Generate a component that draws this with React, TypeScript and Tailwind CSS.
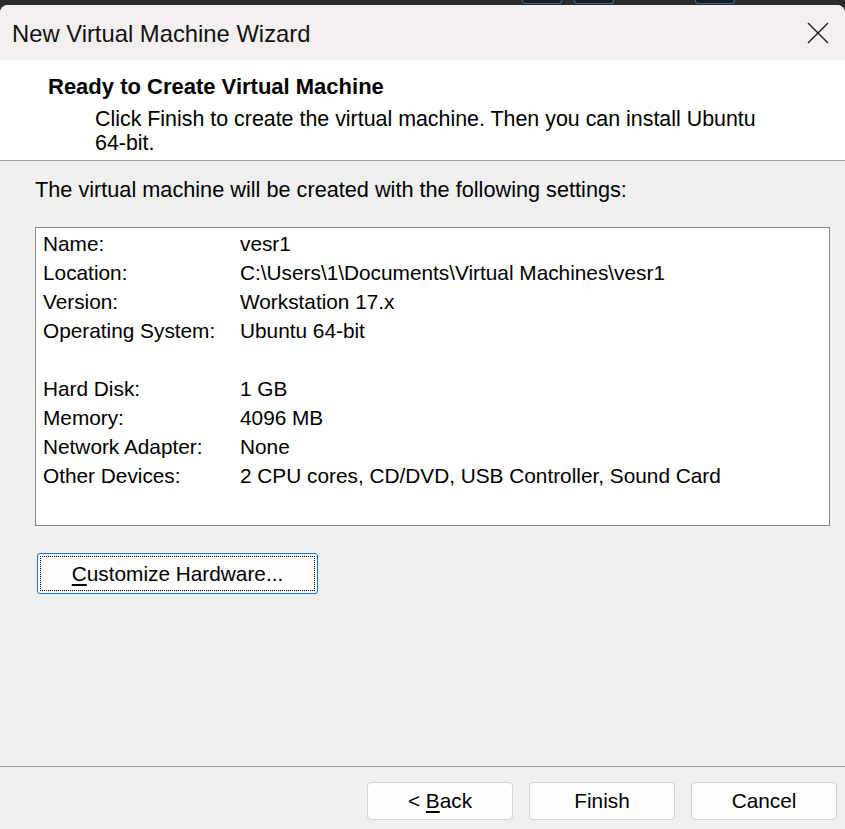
const rows: [string, string][] = [
  ["Name:", "vesr1"],
  ["Location:", "C:\\Users\\1\\Documents\\Virtual Machines\\vesr1"],
  ["Version:", "Workstation 17.x"],
  ["Operating System:", "Ubuntu 64-bit"],
  ["", ""],
  ["Hard Disk:", "1 GB"],
  ["Memory:", "4096 MB"],
  ["Network Adapter:", "None"],
  ["Other Devices:", "2 CPU cores, CD/DVD, USB Controller, Sound Card"],
];

function WizardButton({ children }: { children: React.ReactNode }) {
  return (
    <button className="w-[146px] h-[38px] bg-[#fdfdfd] border border-[#d0d0d0] rounded-[4px] text-[20.8px] text-black leading-none">
      {children}
    </button>
  );
}

export default function App() {
  return (
    <div
      className="w-[845px] h-[829px] bg-[#2b2b2b] flex flex-col overflow-hidden text-black"
      style={{ fontFamily: '"Liberation Sans", Arial, sans-serif' }}
    >
      {/* taskbar fragments behind the window */}
      <div className="h-[5px] flex shrink-0">
        <div className="w-[522px]" />
        <div className="w-[40px] h-[4px] bg-[#1c1c1c] border-b border-x border-[#2f6ea5] rounded-b-[3px]" />
        <div className="w-[12px]" />
        <div className="w-[40px] h-[4px] bg-[#1c1c1c] border-b border-x border-[#2f6ea5] rounded-b-[3px]" />
        <div className="w-[81px]" />
        <div className="w-[40px] h-[4px] bg-[#1c1c1c] border-b border-x border-[#2f6ea5] rounded-b-[3px]" />
      </div>

      <div className="flex-1 flex flex-col rounded-t-[8px] overflow-hidden bg-[#f0f0f0]">
        {/* title bar */}
        <div className="h-[55px] bg-[#f4f0f0] flex items-center justify-between pl-[12px] pr-[16px] shrink-0">
          <span className="text-[23.8px] text-[#111] mt-[2px]">New Virtual Machine Wizard</span>
          <svg width="22" height="22" viewBox="0 0 22 22" className="mt-[1px]">
            <path d="M1 1 L21 21 M21 1 L1 21" stroke="#1a1a1a" strokeWidth="1.4" />
          </svg>
        </div>

        {/* header */}
        <div className="bg-white h-[101px] border-b border-[#a0a0a0] pt-[13px] shrink-0">
          <div className="pl-[48px] text-[22px] font-bold leading-[28px]">Ready to Create Virtual Machine</div>
          <div className="pl-[95px] pr-[60px] text-[21.4px] leading-[24px] pt-[6px]">
            Click Finish to create the virtual machine. Then you can install Ubuntu 64-bit.
          </div>
        </div>

        {/* body */}
        <div className="flex-1 flex flex-col pl-[35px] pr-[15px] pt-[14px]">
          <div className="text-[21.7px] leading-[29px]">The virtual machine will be created with the following settings:</div>
          <div className="mt-[23px] h-[299px] bg-white border border-[#828790] pl-[7px] pt-[1px]">
            {rows.map(([label, value], i) => (
              <div key={i} className="flex h-[29px] items-center text-[20.8px]">
                <span className="w-[197px] shrink-0">{label}</span>
                <span>{value}</span>
              </div>
            ))}
          </div>
          <div className="mt-[27px] ml-[2px]">
            <button className="w-[281px] h-[41px] bg-[#fdfdfd] border border-[#0078d7] rounded-[3px] p-[2px]">
              <div className="w-full h-full border border-dotted border-black flex items-center justify-center text-[20.8px]">
                <span>
                  <span className="underline underline-offset-[3px]">C</span>ustomize Hardware...
                </span>
              </div>
            </button>
          </div>
        </div>

        {/* footer */}
        <div className="h-[63px] border-t border-[#a0a0a0] flex justify-end items-start gap-[16px] pt-[15px] pr-[8px] shrink-0">
          <WizardButton>
            &lt; <span className="underline underline-offset-[3px]">B</span>ack
          </WizardButton>
          <WizardButton>Finish</WizardButton>
          <WizardButton>Cancel</WizardButton>
        </div>
      </div>
    </div>
  );
}
